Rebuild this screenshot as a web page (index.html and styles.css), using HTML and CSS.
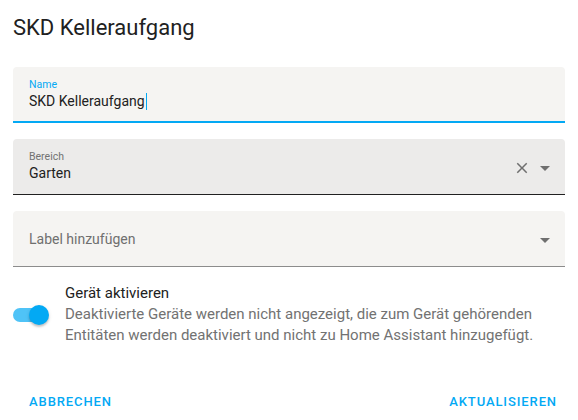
FILE: index.html
```html
<!DOCTYPE html>
<html lang="de">
<head>
  <meta charset="UTF-8" />
  <meta name="viewport" content="width=device-width, initial-scale=1.0"/>
  <title>SKD Kelleraufgang</title>
  <link rel="stylesheet" href="styles.css">
</head>
<body>

  <div class="dialog">
    <h2 class="dialog-title">SKD Kelleraufgang</h2>

    <div class="field focused">
      <div class="field-body">
        <span class="field-label">Name</span>
        <span class="field-value">SKD Kelleraufgang<span class="caret"></span></span>
      </div>
    </div>

    <div class="field hovered">
      <div class="field-body">
        <span class="field-label">Bereich</span>
        <span class="field-value">Garten</span>
      </div>
      <svg class="icon-clear" width="24" height="24" viewBox="0 0 24 24">
        <path d="M19,6.41L17.59,5L12,10.59L6.41,5L5,6.41L10.59,12L5,17.59L6.41,19L12,13.41L17.59,19L19,17.59L13.41,12L19,6.41Z" fill="#6f6f6f"/>
      </svg>
      <svg class="icon-arrow" width="24" height="24" viewBox="0 0 24 24">
        <path d="M7,10L12,15L17,10H7Z" fill="#6f6f6f"/>
      </svg>
    </div>

    <div class="field empty">
      <div class="field-body">
        <span class="field-placeholder">Label hinzufügen</span>
      </div>
      <svg class="icon-arrow" width="24" height="24" viewBox="0 0 24 24">
        <path d="M7,10L12,15L17,10H7Z" fill="#6f6f6f"/>
      </svg>
    </div>

    <div class="setting">
      <div class="switch">
        <div class="switch-track"></div>
        <div class="switch-thumb"></div>
      </div>
      <div class="setting-text">
        <div class="setting-title">Gerät aktivieren</div>
        <div class="setting-desc">Deaktivierte Geräte werden nicht angezeigt, die zum Gerät gehörenden Entitäten werden deaktiviert und nicht zu Home Assistant hinzugefügt.</div>
      </div>
    </div>

    <div class="actions">
      <button>Abbrechen</button>
      <button>Aktualisieren</button>
    </div>
  </div>

</body>
</html>
```

FILE: styles.css
```css
:root {
  --primary: #03a9f4;
  --text: #212121;
  --secondary: #727272;
  --field-bg: #f5f4f2;
  --field-hover: #ecebea;
}

body {
  margin: 0;
  background: #fff;
  font-family: Roboto, 'Noto Sans', sans-serif;
  color: var(--text);
}

.dialog {
  padding: 12px 13px 0 13px;
}

.dialog-title {
  margin: 0 0 23px 0;
  font-size: 22px;
  font-weight: 400;
  line-height: 32px;
  color: var(--text);
}

.field {
  display: flex;
  align-items: center;
  height: 56px;
  box-sizing: border-box;
  margin-bottom: 16px;
  padding: 0 8px 0 16px;
  background: var(--field-bg);
  border-radius: 4px 4px 0 0;
  border-bottom: 1px solid #8c8c8c;
}

.field.focused {
  border-bottom: 2px solid var(--primary);
}

.field.hovered {
  background: var(--field-hover);
  border-bottom: 1px solid #212121;
}

.field-body {
  flex: 1;
  display: flex;
  flex-direction: column;
  align-self: flex-start;
  padding-top: 12px;
}

.field.empty .field-body {
  align-self: center;
  padding-top: 0;
}

.field-label {
  font-size: 10.5px;
  line-height: 12px;
  color: var(--secondary);
}

.focused .field-label {
  color: var(--primary);
}

.field-value {
  font-size: 14px;
  line-height: 20px;
  color: var(--text);
}

.field-placeholder {
  font-size: 14px;
  line-height: 24px;
  color: #6f6f6f;
}

.caret {
  display: inline-block;
  width: 1px;
  height: 17px;
  background: var(--primary);
  vertical-align: -4px;
  margin-left: 1px;
}

.icon-clear {
  width: 18px;
  height: 18px;
  margin: 3px 2px 0 0;
}

.icon-arrow {
  width: 24px;
  height: 24px;
  margin-top: 3px;
}

.setting {
  display: flex;
  align-items: center;
}

.switch {
  position: relative;
  width: 52px;
  height: 20px;
  flex-shrink: 0;
}

.switch-track {
  position: absolute;
  left: 0;
  top: 3px;
  width: 34px;
  height: 14px;
  border-radius: 7px;
  background: #4fc3f7;
}

.switch-thumb {
  position: absolute;
  left: 16px;
  top: 0;
  width: 20px;
  height: 20px;
  border-radius: 50%;
  background: var(--primary);
  box-shadow: 0 2px 2px rgba(0, 0, 0, 0.18), 0 1px 4px rgba(0, 0, 0, 0.1);
}

.setting-title {
  font-size: 15px;
  line-height: 21px;
  color: var(--text);
}

.setting-desc {
  font-size: 15px;
  line-height: 21px;
  color: var(--secondary);
  padding-right: 10px;
}

.actions {
  display: flex;
  justify-content: space-between;
  margin-top: 37px;
  padding: 0 0 0 8px;
}

button {
  background: none;
  border: none;
  padding: 0 8px;
  height: 36px;
  font-family: Roboto, sans-serif;
  font-size: 13px;
  font-weight: 500;
  letter-spacing: 0.9px;
  text-transform: uppercase;
  color: var(--primary);
  cursor: pointer;
}
```
